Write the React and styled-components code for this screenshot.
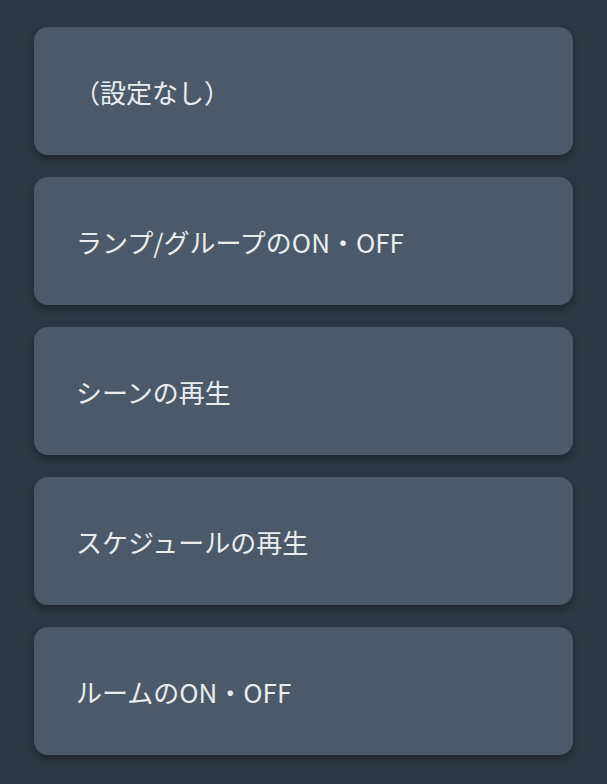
import React from 'react';
import styled, { createGlobalStyle } from 'styled-components';

const GlobalStyle = createGlobalStyle`
  html, body {
    margin: 0;
    padding: 0;
    background: #2c3846;
  }
`;

const Page = styled.div`
  min-height: 784px;
  box-sizing: border-box;
  padding: 27px 34px 30px 34px;
  display: flex;
  flex-direction: column;
  gap: 22px;
  background: #2c3846;
  font-family: "Noto Sans CJK JP", "Noto Sans", sans-serif;
`;

const Option = styled.div`
  height: 128px;
  box-sizing: border-box;
  padding: 1px 0 0 ${(p) => (p.$paren ? 40 : 42)}px;
  display: flex;
  align-items: center;
  background: #4b5a6a;
  border-radius: 14px;
  box-shadow: 0 4px 8px rgba(0, 0, 0, 0.35);
  color: #e9edf0;
  font-size: 26px;
  letter-spacing: 0;
`;

const items = [
  '（設定なし）',
  'ランプ/グループのON・OFF',
  'シーンの再生',
  'スケジュールの再生',
  'ルームのON・OFF',
];

export default function App() {
  return (
    <>
      <GlobalStyle />
      <Page>
        {items.map((t, i) => (
          <Option key={i} $paren={i === 0}>{t}</Option>
        ))}
      </Page>
    </>
  );
}
